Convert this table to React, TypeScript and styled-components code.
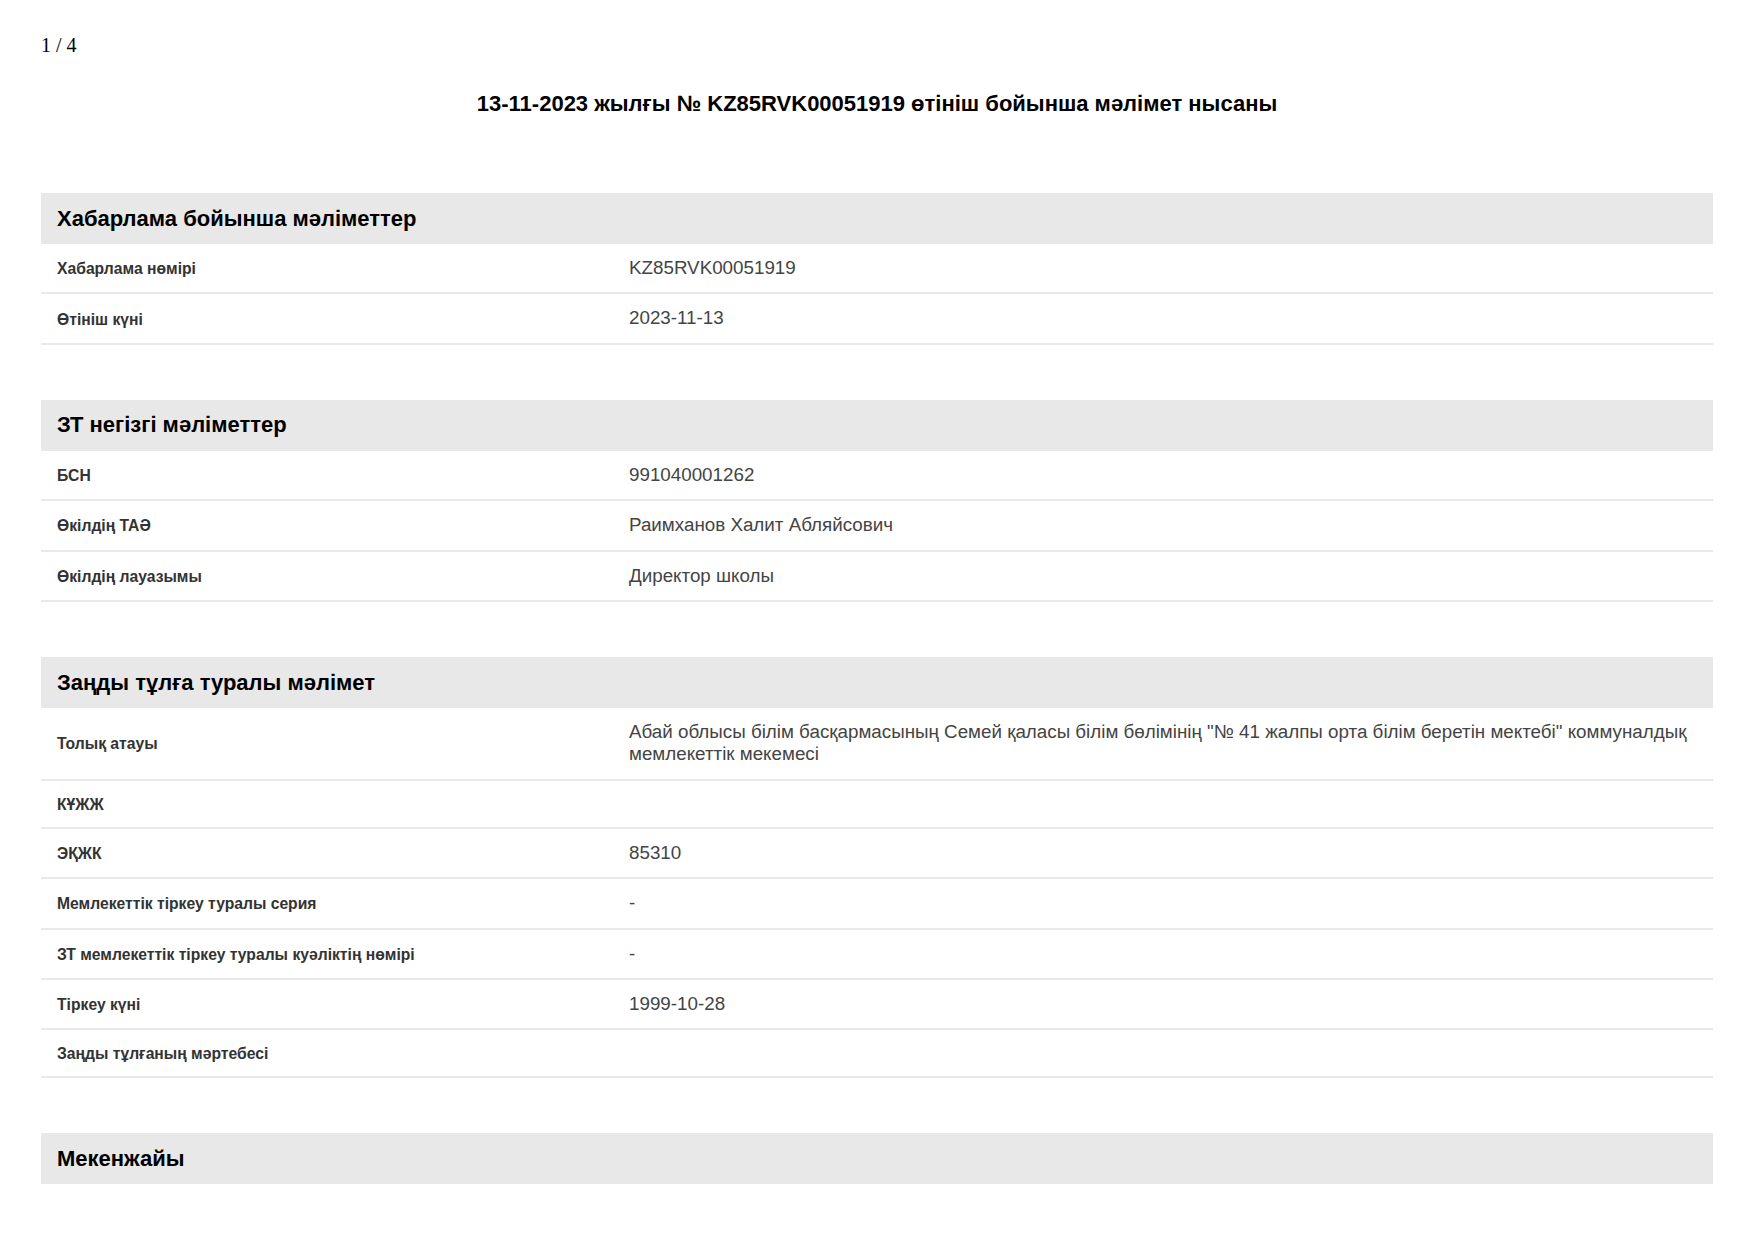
import styled, { createGlobalStyle } from 'styled-components'

type Row = { label: string; value?: string }
type Section = { title: string; rows: Row[] }

const sections: Section[] = [
  {
    title: 'Хабарлама бойынша мәліметтер',
    rows: [
      { label: 'Хабарлама нөмірі', value: 'KZ85RVK00051919' },
      { label: 'Өтініш күні', value: '2023-11-13' },
    ],
  },
  {
    title: 'ЗТ негізгі мәліметтер',
    rows: [
      { label: 'БСН', value: '991040001262' },
      { label: 'Өкілдің ТАӘ', value: 'Раимханов Халит Абляйсович' },
      { label: 'Өкілдің лауазымы', value: 'Директор школы' },
    ],
  },
  {
    title: 'Заңды тұлға туралы мәлімет',
    rows: [
      {
        label: 'Толық атауы',
        value:
          'Абай облысы білім басқармасының Семей қаласы білім бөлімінің "№ 41 жалпы орта білім беретін мектебі" коммуналдық мемлекеттік мекемесі',
      },
      { label: 'КҰЖЖ' },
      { label: 'ЭҚЖК', value: '85310' },
      { label: 'Мемлекеттік тіркеу туралы серия', value: '-' },
      { label: 'ЗТ мемлекеттік тіркеу туралы куәліктің нөмірі', value: '-' },
      { label: 'Тіркеу күні', value: '1999-10-28' },
      { label: 'Заңды тұлғаның мәртебесі' },
    ],
  },
  {
    title: 'Мекенжайы',
    rows: [],
  },
]

export default function App() {
  return (
    <>
      <GlobalStyle />
      <Page>
        <PageNum>1 / 4</PageNum>
        <Title>13-11-2023 жылғы № KZ85RVK00051919 өтініш бойынша мәлімет нысаны</Title>
        {sections.map((s) => (
          <Block key={s.title}>
            <BlockHeader>{s.title}</BlockHeader>
            {s.rows.map((r) => (
              <InfoRow key={r.label}>
                <Label>{r.label}</Label>
                <Value>{r.value ?? ''}</Value>
              </InfoRow>
            ))}
          </Block>
        ))}
      </Page>
    </>
  )
}

const GlobalStyle = createGlobalStyle`
  html, body {
    margin: 0;
    padding: 0;
    background: #fff;
  }
  body {
    font-family: 'Liberation Sans', Arial, sans-serif;
  }
`

const Page = styled.div`
  padding: 34px 42px 40px 41px;
  display: flex;
  flex-direction: column;
`

const PageNum = styled.div`
  font-family: 'Liberation Serif', 'Times New Roman', serif;
  font-size: 20px;
  line-height: 23px;
  color: #000;
`

const Title = styled.h1`
  margin: 34px 0 0;
  text-align: center;
  font-size: 22px;
  line-height: 25px;
  font-weight: bold;
  color: #000;
`

const Block = styled.section`
  margin-top: 55px;

  &:first-of-type {
    margin-top: 77px;
  }
`

const BlockHeader = styled.div`
  height: 51px;
  display: flex;
  align-items: center;
  padding: 0 16px;
  background: #e8e8e8;
  font-size: 22px;
  font-weight: bold;
  color: #000;
`

const InfoRow = styled.div`
  display: grid;
  grid-template-columns: 571px 1fr;
  align-items: center;
  border-bottom: 2px solid #e9e9e9;
`

const Label = styled.div`
  padding: 14px 16px 12px;
  font-size: 15.7px;
  line-height: 20px;
  font-weight: bold;
  color: #333;
`

const Value = styled.div`
  padding: 13px 17px;
  font-size: 18.8px;
  line-height: 22.4px;
  color: #444;
`
